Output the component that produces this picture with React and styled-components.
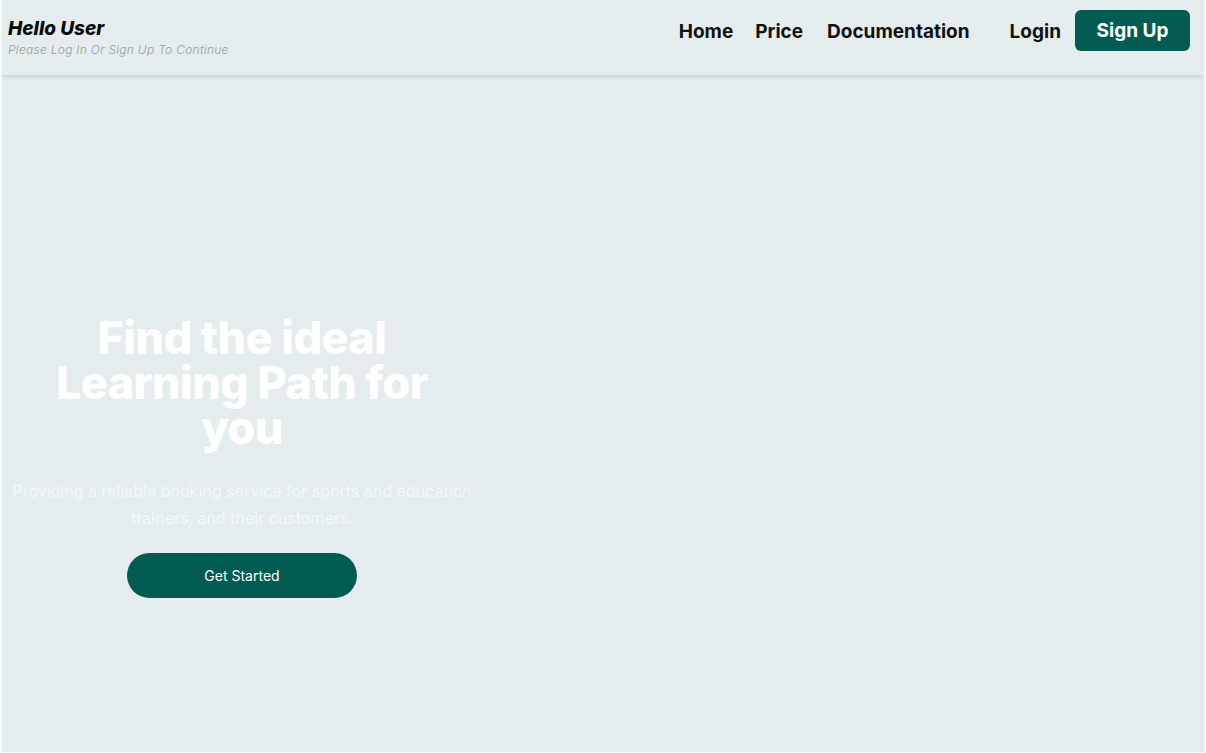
import React from 'react';
import styled, { createGlobalStyle } from 'styled-components';

const GlobalStyle = createGlobalStyle`
  html, body {
    margin: 0;
    padding: 0;
    background: #e4eced;
    font-family: Inter, "Noto Sans", sans-serif;
  }
`

const Page = styled.div`
  width: 1206px;
  height: 753px;
  display: flex;
  flex-direction: column;
  background: #e4eced;
  border-left: 2px solid #f3f7f7;
  border-right: 2px solid #f3f7f7;
  border-bottom: 1px solid #f3f7f7;
  box-sizing: border-box;
  overflow: hidden;
`

const Header = styled.header`
  height: 75px;
  flex-shrink: 0;
  display: flex;
  align-items: flex-start;
  justify-content: space-between;
  padding: 10px 14px 0 6px;
  box-sizing: border-box;
  box-shadow: 0 2px 4px rgba(0, 0, 0, 0.12);
  position: relative;
  z-index: 1;
`

const Greeting = styled.div`
  display: flex;
  flex-direction: column;
  padding-top: 7px;
`

const Hello = styled.span`
  font-size: 19px;
  font-weight: 800;
  font-style: italic;
  color: #0a0a0a;
  line-height: 23px;
`

const Hint = styled.span`
  font-size: 12px;
  font-weight: 300;
  font-style: italic;
  letter-spacing: 0.28px;
  color: #9a9fa0;
  line-height: 14px;
  margin-top: 3px;
`

const Nav = styled.nav`
  display: flex;
  align-items: center;
  padding-top: 1px;
`

const NavLink = styled.a`
  font-size: 19px;
  font-weight: 700;
  color: #111;
  margin-right: ${p => p.$gap || 24}px;
  cursor: pointer;
`

const SignUp = styled.button`
  background: #045b52;
  color: #fff;
  border: none;
  border-radius: 6px;
  width: 115px;
  height: 41px;
  margin-top: -1px;
  font-family: inherit;
  font-size: 19px;
  font-weight: 700;
`

const Hero = styled.main`
  flex: 1;
  display: flex;
`

const HeroColumn = styled.section`
  width: 480px;
  display: flex;
  flex-direction: column;
  align-items: center;
  text-align: center;
  padding-top: 240px;
`

const Title = styled.h1`
  margin: 0;
  width: 440px;
  font-size: 45px;
  font-weight: 800;
  line-height: 45px;
  letter-spacing: -0.6px;
  color: #fff;
`

const Lead = styled.p`
  margin: 28px 0 0;
  width: 476px;
  font-size: 16px;
  line-height: 27px;
  color: #f4f8f8;
`

const CTA = styled.button`
  margin-top: 21px;
  width: 230px;
  height: 45px;
  border: none;
  border-radius: 23px;
  background: #025b52;
  color: #fff;
  font-family: inherit;
  font-size: 14px;
`

export default function App() {
  return (
    <Page>
      <GlobalStyle />
      <Header>
        <Greeting>
          <Hello>Hello User</Hello>
          <Hint>Please Log In Or Sign Up To Continue</Hint>
        </Greeting>
        <Nav>
          <NavLink $gap={22}>Home</NavLink>
          <NavLink $gap={24}>Price</NavLink>
          <NavLink $gap={40}>Documentation</NavLink>
          <NavLink $gap={14}>Login</NavLink>
          <SignUp>Sign Up</SignUp>
        </Nav>
      </Header>
      <Hero>
        <HeroColumn>
          <Title>Find the ideal Learning Path for you</Title>
          <Lead>Providing a reliable booking service for sports and education trainers, and their customers.</Lead>
          <CTA>Get Started</CTA>
        </HeroColumn>
      </Hero>
    </Page>
  );
}
